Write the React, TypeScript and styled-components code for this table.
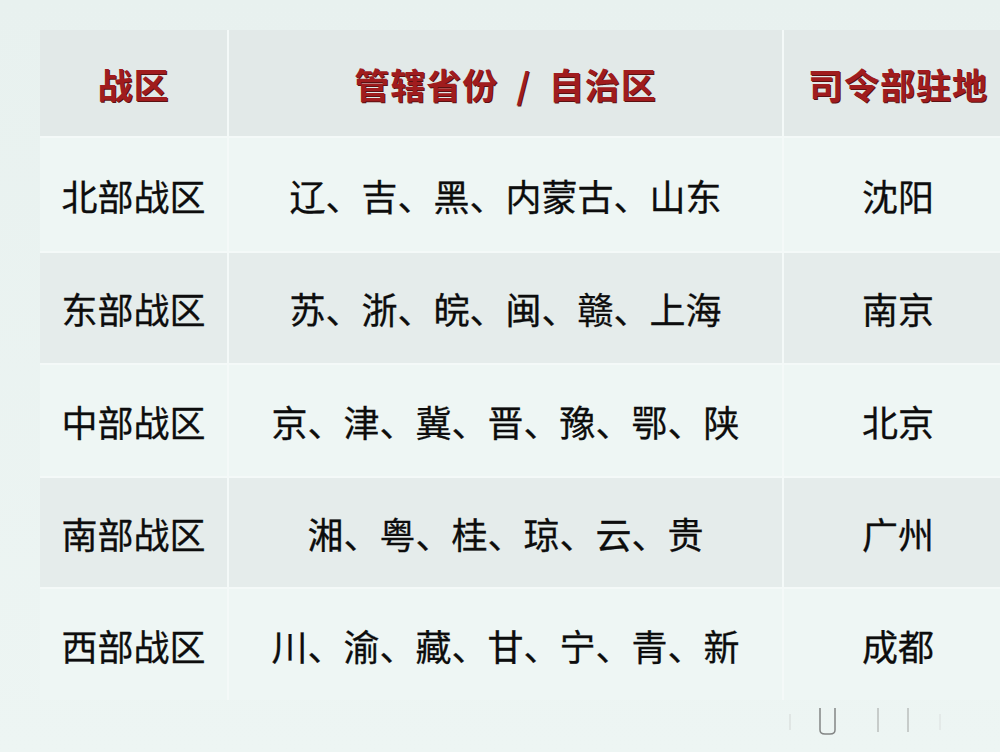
import * as React from 'react';
import styled, { createGlobalStyle } from 'styled-components';

const GlobalStyle = createGlobalStyle`
  html, body {
    margin: 0;
    padding: 0;
    background: #e9f2f0;
    font-family: "Noto Sans CJK SC", "Noto Sans", sans-serif;
  }
`;

const Page = styled.div`
  width: 1000px;
  height: 752px;
  overflow: hidden;
  box-sizing: border-box;
  padding: 30px 0 0 40px;
  background: linear-gradient(180deg, #e8f1ef 0%, #edf5f3 100%);
  position: relative;
`;

const Table = styled.div`
  display: grid;
  grid-template-columns: 187px 553px 228px;
  grid-template-rows: 106px 113px 110px 111px 109px 111px;
  gap: 2px;
  width: 972px;
  background: #f4f9f8;
`;

const Cell = styled.div<{ $shade: 'head' | 'dark' | 'light' }>`
  display: flex;
  align-items: center;
  justify-content: center;
  background: ${p =>
    p.$shade === 'head' ? '#e2e9e8' : p.$shade === 'dark' ? '#e5eceb' : '#eef6f4'};
`;

const HeadText = styled.span`
  font-size: 35px;
  font-weight: 700;
  letter-spacing: 1px;
  color: #a01c1e;
  text-shadow: 1px 1px 0 #5a1112;
  white-space: pre;
`;

const BodyText = styled.span`
  font-size: 36px;
  font-weight: 400;
  color: #0d0d0d;
  -webkit-text-stroke: 0.3px #0d0d0d;
  white-space: pre;
`;

const Mark = styled.svg`
  position: absolute;
  left: 780px;
  top: 700px;
`;

const rows = [
  ['北部战区', '辽、吉、黑、内蒙古、山东', '沈阳'],
  ['东部战区', '苏、浙、皖、闽、赣、上海', '南京'],
  ['中部战区', '京、津、冀、晋、豫、鄂、陕', '北京'],
  ['南部战区', '湘、粤、桂、琼、云、贵', '广州'],
  ['西部战区', '川、渝、藏、甘、宁、青、新', '成都'],
];

export default function App() {
  return (
    <>
      <GlobalStyle />
      <Page>
        <Table>
          <Cell $shade="head">
            <HeadText>战区</HeadText>
          </Cell>
          <Cell $shade="head">
            <HeadText>管辖省份  /  自治区</HeadText>
          </Cell>
          <Cell $shade="head">
            <HeadText>司令部驻地</HeadText>
          </Cell>
          {rows.map((r, i) =>
            r.map((t, j) => (
              <Cell key={`${i}-${j}`} $shade={i % 2 === 0 ? 'light' : 'dark'}>
                <BodyText>{t}</BodyText>
              </Cell>
            )),
          )}
        </Table>
        {/* faint watermark remnants */}
        <Mark width="200" height="40" viewBox="0 0 200 40">
          <path d="M40 8 V30 Q40 34 45 34 H50 Q55 34 55 30 V8" fill="none" stroke="#555" strokeWidth="1.5" opacity="0.7" />
          <line x1="98" y1="8" x2="98" y2="32" stroke="#888" strokeWidth="1.5" opacity="0.5" />
          <line x1="128" y1="8" x2="128" y2="32" stroke="#888" strokeWidth="1.5" opacity="0.5" />
          <line x1="10" y1="14" x2="10" y2="30" stroke="#bbb" strokeWidth="1" opacity="0.5" />
          <line x1="160" y1="14" x2="160" y2="30" stroke="#ccc" strokeWidth="1" opacity="0.5" />
        </Mark>
      </Page>
    </>
  );
}
